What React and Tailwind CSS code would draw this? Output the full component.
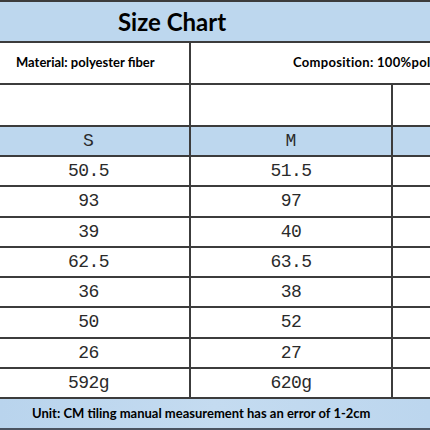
import React from "react";

const sans = { fontFamily: "Lato, 'Open Sans', sans-serif" };
const mono = { fontFamily: "'Liberation Mono', 'DejaVu Sans Mono', monospace" };

// size values per row: [S, M]
const rows = [
  ["50.5", "51.5", "h-[30px]"],
  ["93", "97", "h-[31px]"],
  ["39", "40", "h-[30px]"],
  ["62.5", "63.5", "h-[30px]"],
  ["36", "38", "h-[30px]"],
  ["50", "52", "h-[31px]"],
  ["26", "27", "h-[30px]"],
  ["592g", "620g", "h-[30px]"],
];

function Row({ className, children }) {
  return (
    <div className={"flex w-full border-b-2 border-[#3c3c3c] " + className}>
      {children}
    </div>
  );
}

export default function App() {
  return (
    <div className="w-[430px] h-[430px] overflow-hidden bg-white text-black">
      {/* title band */}
      <div
        className="h-[43px] bg-[#bdd7ee] border-t-2 border-b-2 border-[#3c3c3c] flex items-center pl-[118px]"
        style={sans}
      >
        <span className="text-[24px] font-bold">Size Chart</span>
      </div>

      {/* material / composition */}
      <Row className="h-[42px]">
        <div className="w-[191px] border-r-2 border-[#3c3c3c] flex items-center pl-[16px]" style={sans}>
          <span className="text-[13px] font-bold whitespace-nowrap">Material: polyester fiber</span>
        </div>
        <div className="flex-1 flex items-center pl-[102px] overflow-hidden" style={sans}>
          <span className="text-[13px] font-bold tracking-[0.3px] whitespace-nowrap">Composition: 100%polyester</span>
        </div>
      </Row>

      {/* empty row */}
      <Row className="h-[42px]">
        <div className="w-[191px] border-r-2 border-[#3c3c3c]" />
        <div className="w-[202px] border-r-2 border-[#3c3c3c]" />
        <div className="flex-1" />
      </Row>

      {/* size header */}
      <Row className="h-[30px] bg-[#bdd7ee]">
        <div className="w-[191px] border-r-2 border-[#3c3c3c] flex items-center justify-center pr-[12px] text-[18px] text-[#2a2a2a]" style={mono}>
          S
        </div>
        <div className="w-[202px] border-r-2 border-[#3c3c3c] flex items-center justify-center text-[18px] text-[#2a2a2a]" style={mono}>
          M
        </div>
        <div className="flex-1" />
      </Row>

      {rows.map(([s, m, h], i) => (
        <Row key={i} className={h}>
          <div className="w-[191px] border-r-2 border-[#3c3c3c] flex items-center justify-center pr-[12px] text-[18px] tracking-[-0.5px] text-[#2a2a2a]" style={mono}>
            {s}
          </div>
          <div className="w-[202px] border-r-2 border-[#3c3c3c] flex items-center justify-center text-[18px] tracking-[-0.5px] text-[#2a2a2a]" style={mono}>
            {m}
          </div>
          <div className="flex-1" />
        </Row>
      ))}

      {/* footer note */}
      <div
        className="h-[31px] bg-gradient-to-r from-[#b9d4ed] via-[#c4dbf0] to-[#bcd6ee] border-b-2 border-[#4a5360] flex items-center pl-[32px]"
        style={sans}
      >
        <span className="text-[13px] font-bold whitespace-nowrap">
          Unit: CM tiling manual measurement has an error of 1-2cm
        </span>
      </div>
    </div>
  );
}
